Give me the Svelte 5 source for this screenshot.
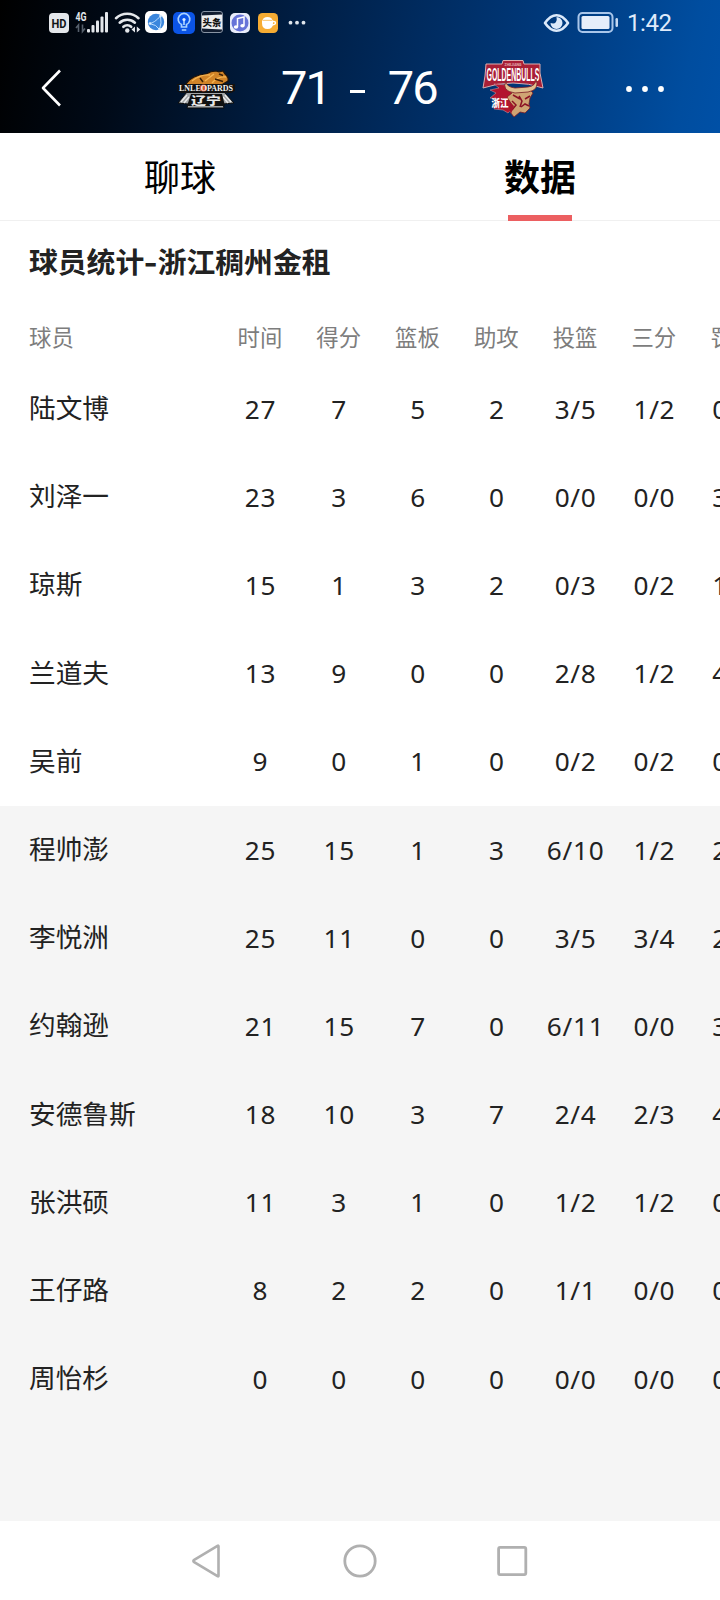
<script lang="ts">
  type Player = {
    name: string;
    stats: string[];
  };

  const columns: string[] = ['时间', '得分', '篮板', '助攻', '投篮', '三分', '罚球'];

  const starters: Player[] = [
    { name: '陆文博', stats: ['27', '7', '5', '2', '3/5', '1/2', '0/0'] },
    { name: '刘泽一', stats: ['23', '3', '6', '0', '0/0', '0/0', '3/4'] },
    { name: '琼斯', stats: ['15', '1', '3', '2', '0/3', '0/2', '1/2'] },
    { name: '兰道夫', stats: ['13', '9', '0', '0', '2/8', '1/2', '4/4'] },
    { name: '吴前', stats: ['9', '0', '1', '0', '0/2', '0/2', '0/0'] },
  ];

  const bench: Player[] = [
    { name: '程帅澎', stats: ['25', '15', '1', '3', '6/10', '1/2', '2/2'] },
    { name: '李悦洲', stats: ['25', '11', '0', '0', '3/5', '3/4', '2/2'] },
    { name: '约翰逊', stats: ['21', '15', '7', '0', '6/11', '0/0', '3/4'] },
    { name: '安德鲁斯', stats: ['18', '10', '3', '7', '2/4', '2/3', '4/4'] },
    { name: '张洪硕', stats: ['11', '3', '1', '0', '1/2', '1/2', '0/0'] },
    { name: '王仔路', stats: ['8', '2', '2', '0', '1/1', '0/0', '0/0'] },
    { name: '周怡杉', stats: ['0', '0', '0', '0', '0/0', '0/0', '0/0'] },
  ];

  const tabs: string[] = ['聊球', '数据'];
  let activeTab = $state('数据');
</script>

{#snippet playerRow(player: Player)}
  <div class="row">
    <span class="name">{player.name}</span>
    {#each player.stats as value}
      <span class="stat">{value}</span>
    {/each}
  </div>
{/snippet}

<div class="screen">
  <header>
    <div class="status-bar">
      <!-- network, wifi and running apps -->
      <svg class="status-left" width="270" height="44" viewBox="46 0 270 44">
        <rect x="49" y="13" width="20" height="20" rx="4" fill="#e4e7eb" />
        <text x="59" y="28.2" class="hd" text-anchor="middle" textLength="15" lengthAdjust="spacingAndGlyphs">HD</text>
        <text x="75.5" y="21" class="net" textLength="11" lengthAdjust="spacingAndGlyphs">4G</text>
        <g fill="none" stroke="#56606c" stroke-width="1.6">
          <path d="M78.5 32v-7l-2.5 3M82.5 24.5v7l2.5-3" />
        </g>
        <g fill="#e4e7eb">
          <rect x="87" y="29" width="3" height="3.5" rx="1" />
          <rect x="91.5" y="25" width="3" height="7.5" rx="1" />
          <rect x="96" y="20.5" width="3" height="12" rx="1" />
          <rect x="100.5" y="16.5" width="3" height="16" rx="1" />
          <rect x="105" y="12" width="3" height="20.5" rx="1" />
        </g>
        <g fill="none" stroke="#e4e7eb" stroke-width="2.6" stroke-linecap="round">
          <path d="M116 18.2a16.5 16.5 0 0 1 22.5 0" />
          <path d="M119.7 22.7a11.2 11.2 0 0 1 15.2 0" />
          <path d="M123.4 26.8a5.8 5.8 0 0 1 7.8 0" />
        </g>
        <circle cx="127.3" cy="30.5" r="2.2" fill="#e4e7eb" />
        <path d="M135 26.5v6l-3.5-3zM136.8 26.5v6l3.5-3z" fill="#e4e7eb" />

        <rect x="145" y="11" width="22" height="22" rx="5" fill="#fff" />
        <circle cx="156" cy="22" r="8.2" fill="#3a86dd" />
        <path d="M149.5 23.5q5-.5 11-7.5M149.5 23.5q7 1 10 6M160.5 16q1.5 7-1 13.5" fill="none" stroke="#b9dcff" stroke-width="1" />
        <circle cx="150" cy="23.5" r="1.3" fill="#d8ecff" />
        <circle cx="160.5" cy="16" r="1.3" fill="#d8ecff" />
        <circle cx="159.5" cy="29" r="1.3" fill="#d8ecff" />

        <rect x="173" y="12" width="22" height="22" rx="5" fill="#0b54e6" />
        <path d="M181.5 27v-2.5a5.8 5.8 0 1 1 5 0V27z" fill="none" stroke="#a9d2ff" stroke-width="1.7" />
        <path d="M184 20v5M181.8 30h4.5" stroke="#a9d2ff" stroke-width="1.7" />
        <circle cx="184" cy="19.5" r="1.6" fill="#d9ecff" />

        <rect x="201.5" y="11.5" width="21" height="21" rx="2.5" fill="#101c30" stroke="#8793a3" />
        <path d="M202 15.5l20-1v15l-20-1z" fill="#eceef0" />
        <text x="212" y="26" class="toutiao" text-anchor="middle">头条</text>

        <rect x="230" y="13" width="20" height="20" rx="5" fill="#e9edfb" />
        <circle cx="240" cy="23" r="8.5" fill="#6673d8" />
        <path d="M237.5 27v-8.5l6.5-1.5v8.5" fill="none" stroke="#fff" stroke-width="1.5" />
        <ellipse cx="236" cy="27" rx="2.2" ry="1.8" fill="#fff" />
        <ellipse cx="242.5" cy="25.8" rx="2.2" ry="1.8" fill="#fff" />

        <rect x="258" y="13" width="20" height="20" rx="4.5" fill="#f6ac33" />
        <path d="M262 20.5h11v2.5q0 6-5.5 6t-5.5-6z" fill="#fff" />
        <path d="M272 21.5h1.5q2 0 2 1.6t-3.5 2" fill="none" stroke="#fff" stroke-width="1.3" />
        <path d="M262.5 20.5q.5-3.5 5-3.5t5 3.5z" fill="#fff" />
        <path d="M263 20.3h9" stroke="#f6ac33" stroke-width="0.6" />

        <g fill="#dfe5ec">
          <circle cx="290.5" cy="22.7" r="1.9" />
          <circle cx="297" cy="22.7" r="1.9" />
          <circle cx="303.5" cy="22.7" r="1.9" />
        </g>
      </svg>

      <svg class="status-right" width="80" height="44" viewBox="542 0 80 44">
        <path d="M545 23q5.3-7.8 11.5-7.8T568 23q-5.3 7.8-11.5 7.8T545 23z" fill="none" stroke="#dbe9fa" stroke-width="2.6" stroke-linejoin="round" />
        <path d="M556.5 17a6 6 0 1 1-6 6q3.8 1.3 5.3-.8t.7-5.2z" fill="#dbe9fa" />
        <rect x="578.5" y="13" width="34" height="19" rx="4" fill="none" stroke="#a9c6ea" stroke-width="2" />
        <rect x="581.5" y="16" width="28" height="13" rx="1.5" fill="#e6eefa" />
        <rect x="615.5" y="18" width="2.5" height="9" rx="1.2" fill="#c5d9f2" />
      </svg>
      <span class="clock">1:42</span>
    </div>

    <div class="match-bar">
      <button class="icon-btn back" aria-label="返回">
        <svg width="24" height="40" viewBox="0 0 24 40">
          <path d="M21 2.5L4 20l17 17.5" fill="none" stroke="#fff" stroke-width="2.6" stroke-linejoin="round" />
        </svg>
      </button>

      <svg class="leopards" width="60" height="40" viewBox="0 0 60 40">
        <path d="M10 15q6-9 20-10 5-3 10-3l3 1 4-1 2 3q4 3 3 7l-5 3-9 3H10z" fill="#d18428" stroke="#20140a" stroke-width="1.2" />
        <path d="M16 12q9-7 18-6M29 12l9-7M36 14q6-7 14-6" fill="none" stroke="#f6b552" stroke-width="1.4" />
        <path d="M43 5l4 1.5M39 10l8 2.5M24 9l3 4" stroke="#3b2108" stroke-width="1.5" />
        <path d="M11 23L2 34l10 1-1 4h37l-1-4 11-1-10-11z" fill="#a3a6a8" stroke="#0b0b0b" stroke-width="1" />
        <path d="M5 33l6-7M8 34l5-6M55 33l-6-7M52 34l-5-6" stroke="#ececec" stroke-width="1.3" />
        <path d="M15 25h31l3 12H11z" fill="#111" />
        <text x="30" y="35.8" class="leopards-short" text-anchor="middle" textLength="30" lengthAdjust="spacingAndGlyphs">辽宁</text>
        <path d="M1 15h58v7l-4 2H5l-4-2z" fill="#111" />
        <circle cx="27.5" cy="19" r="3.6" fill="#d8542c" />
        <text x="30" y="22.3" class="leopards-name" text-anchor="middle" textLength="54" lengthAdjust="spacingAndGlyphs">LNLEOPARDS</text>
      </svg>

      <div class="score">
        <span>71</span>
        <i></i>
        <span>76</span>
      </div>

      <svg class="bulls" width="62" height="60" viewBox="0 0 62 60">
        <path d="M4 6h16l1-3.5h20l1 3.5h16v9l3 15q-14-5-30-5T1 30l2-12z" fill="#a91f36" stroke="#dcaeb0" stroke-width="1" />
        <text x="31" y="7.5" class="bulls-city" text-anchor="middle" textLength="17" lengthAdjust="spacingAndGlyphs">ZHEJIANG</text>
        <text x="31" y="22.5" class="bulls-name" text-anchor="middle" textLength="53" lengthAdjust="spacingAndGlyphs">GOLDENBULLS</text>
        <!-- mane -->
        <path d="M25 27l-13-1 5 4-9 2 6 3-6 5 7 1-3 10 9 1 5 3 11-11z" fill="#b3142f" stroke="#d9a5a5" stroke-width="0.5" />
        <!-- head -->
        <path d="M25 30l9 3 14-1 3 3-3 5-1 6 1 4-5 5-5-1-6 5-4-5 2-7-5-8 5-4z" fill="#cfa473" stroke="#7a1c24" stroke-width="0.8" />
        <!-- horns -->
        <path d="M24 23q-5 10 9 12l13-1q12-2 8-13 0 7-8 8l-13 1q-9-1-9-7z" fill="#e0bf8e" stroke="#7a1c24" stroke-width="0.8" />
        <path d="M31 37l7 4M48 38l-5 3M30 43l4 4-4 5M37 38l3 5-2 6M39 49l4-3 4 2" fill="none" stroke="#8c1224" stroke-width="1.5" />
        <path d="M27 49l2-4 3 3-3 8z" fill="#a3142b" />
        <text x="9.5" y="48.5" class="bulls-cn" textLength="17" lengthAdjust="spacingAndGlyphs">浙江</text>
      </svg>

      <button class="icon-btn more" aria-label="更多">
        <svg width="42" height="10" viewBox="0 0 42 10">
          <circle cx="5" cy="5" r="2.9" fill="#fff" />
          <circle cx="21" cy="5" r="2.9" fill="#fff" />
          <circle cx="37" cy="5" r="2.9" fill="#fff" />
        </svg>
      </button>
    </div>
  </header>

  <nav class="tabs">
    {#each tabs as tab}
      <button class="tab" class:active={tab === activeTab} onclick={() => (activeTab = tab)}>{tab}</button>
    {/each}
  </nav>

  <main>
    <h2>球员统计<b>-</b>浙江稠州金租</h2>
    <div class="row head">
      <span class="name">球员</span>
      {#each columns as column}
        <span class="stat">{column}</span>
      {/each}
    </div>
    <section>
      {#each starters as player}
        {@render playerRow(player)}
      {/each}
    </section>
    <section class="bench">
      {#each bench as player}
        {@render playerRow(player)}
      {/each}
    </section>
  </main>

  <footer>
    <svg width="32" height="36" viewBox="0 0 32 36">
      <path d="M27.5 3.3v29.4q0 1-1 .4L3.2 19.2q-1.7-1.2 0-2.4L26.5 2.9q1-.6 1 .4z" fill="none" stroke="#b0b0b0" stroke-width="2.6" />
    </svg>
    <svg width="36" height="36" viewBox="0 0 36 36">
      <circle cx="18" cy="18" r="15.2" fill="none" stroke="#b0b0b0" stroke-width="2.8" />
    </svg>
    <svg width="32" height="32" viewBox="0 0 32 32">
      <rect x="1.6" y="2.4" width="27.2" height="27.2" rx="1.5" fill="none" stroke="#b0b0b0" stroke-width="2.8" />
    </svg>
  </footer>
</div>

<style>
  :global(body) {
    background: #fff;
  }

  .screen {
    display: flex;
    flex-direction: column;
    width: 720px;
    height: 1600px;
    overflow: hidden;
    font-family: 'Noto Sans CJK SC', sans-serif;
    color: #222;
    background: #fff;
  }

  header {
    height: 133px;
    flex: none;
    background: linear-gradient(101deg, #000 0%, #000a18 17%, #001f46 42%, #003778 72%, #004d9f 94%, #0050a6 100%);
  }

  .status-bar {
    display: flex;
    height: 44px;
    padding-left: 46px;
  }

  .status-right {
    margin-left: 226px;
  }

  .clock {
    margin-left: 5px;
    font: 24px/47px Roboto, sans-serif;
    letter-spacing: -0.4px;
    color: #dfeafa;
  }

  .hd {
    font: bold 12.5px Roboto, sans-serif;
    fill: #101418;
  }

  .net {
    font: bold 12px Roboto, sans-serif;
    fill: #e4e7eb;
  }

  .toutiao {
    font: 900 9.5px 'Noto Sans CJK SC', sans-serif;
    fill: #111;
  }

  .match-bar {
    display: flex;
    align-items: center;
    height: 88px;
    padding-left: 39px;
  }

  .icon-btn {
    display: flex;
    padding: 0;
    border: 0;
    background: none;
  }

  .leopards {
    margin: 2px 0 0 113px;
  }

  .leopards-name {
    font: bold 8.5px 'Liberation Serif', serif;
    fill: #f4f4f4;
  }

  .leopards-short {
    font: 900 11px 'Noto Sans CJK SC', sans-serif;
    fill: #e8e8e8;
  }

  .score {
    display: flex;
    align-items: center;
    width: 156px;
    margin-left: 45px;
    font: 47px/60px Roboto, sans-serif;
    letter-spacing: -2px;
    color: #fff;
  }

  .score i {
    width: 15px;
    height: 3px;
    margin: 6px 23px 0 20px;
    background: #fff;
  }

  .bulls {
    margin-left: 45px;
  }

  .bulls-city {
    font: bold 4px Roboto, sans-serif;
    fill: #e3b0b0;
  }

  .bulls-name {
    font: bold 18px 'Liberation Sans', sans-serif;
    fill: #fff;
  }

  .bulls-cn {
    font: 900 10px 'Noto Sans CJK SC', sans-serif;
    fill: #fff;
  }

  .more {
    margin: 1px 0 0 80px;
  }

  .tabs {
    display: flex;
    flex: none;
    height: 88px;
    border-bottom: 1px solid #f0f0f0;
    box-sizing: border-box;
  }

  .tab {
    flex: 1;
    position: relative;
    padding: 0 0 4px;
    border: 0;
    background: none;
    font: 400 36px/80px 'Noto Sans CJK SC', sans-serif;
    color: #000;
  }

  .tab.active {
    font-weight: 700;
  }

  .tab.active::after {
    content: '';
    position: absolute;
    left: calc(50% - 32px);
    bottom: -1px;
    width: 64px;
    height: 6px;
    background: #ec5f61;
  }

  main {
    flex: none;
    height: 1300px;
    display: flex;
    flex-direction: column;
  }

  h2 {
    margin: 0;
    padding-left: 29px;
    height: 84px;
    font-size: 28.8px;
    line-height: 79px;
    font-weight: 700;
  }

  h2 b {
    display: inline-block;
    width: 13.5px;
    text-align: center;
    transform: scaleX(1.25);
  }

  .row {
    display: grid;
    grid-template-columns: 191.5px repeat(7, 78.8px);
    align-items: center;
    width: 743px;
    height: 88.2px;
    padding-left: 29px;
  }

  .name {
    font-size: 26.7px;
    line-height: 40px;
    margin-top: -4px;
  }

  .stat {
    padding-left: 1px;
    margin-top: -1px;
    text-align: center;
    font-family: 'Noto Sans', sans-serif;
    font-size: 26.2px;
    line-height: 40px;
    letter-spacing: 0.7px;
  }

  .head {
    height: 60px;
    color: #7d7d7d;
  }

  .head .name,
  .head .stat {
    margin: 2px 0 0;
    padding: 0;
    font-family: 'Noto Sans CJK SC', sans-serif;
    font-size: 22.4px;
    letter-spacing: 0;
  }

  .bench {
    flex: 1;
    background: #f5f5f5;
  }

  footer {
    flex: 1;
    display: flex;
    justify-content: center;
    align-items: center;
    gap: 119px;
  }
</style>
